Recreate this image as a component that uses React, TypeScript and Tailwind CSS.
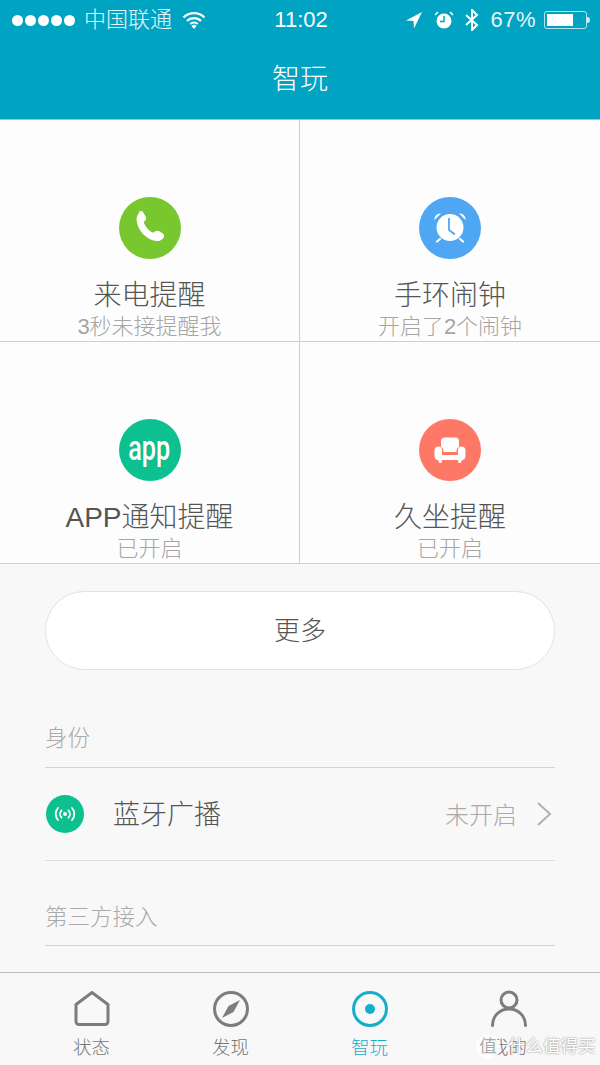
const cjk = { fontFamily: '"Liberation Sans", "Noto Sans CJK SC", sans-serif' };

const PhoneIcon = () => (
  <svg width="62" height="62" viewBox="0 0 62 62">
    <path
      transform="translate(30.500 30.500) scale(1.2) translate(-30.500 -30.500)"
      d="M21.500 17.500c1.200-1.100 3-1 3.800.4l2.100 3.600c.6 1.100.4 2.300-.5 3.100l-1.300 1.200c.9 3.700 4.500 7.700 8.100 9.100l1.500-1.200c.9-.7 2.100-.8 3.100-.2l3.300 2.100c1.300.8 1.500 2.500.5 3.600-1.400 1.500-3.400 2.900-5.900 2.600-8.400-1-15.800-9-16.500-17.500-.2-2.400.8-4.600 2.600-6.800z"
      fill="#fff"
    />
  </svg>
);

const AlarmIcon = () => (
  <svg width="62" height="62" viewBox="0 0 62 62">
    <circle cx="31" cy="30.500" r="13.500" fill="#fff" />
    <path d="M30 21v12l6 4.500" stroke="#4fa6f3" strokeWidth="1.800" fill="none" />
    <path d="M15.500 23c-.5-3.500 2.500-7 6.500-6.500zM46.500 23c.5-3.500-2.500-7-6.500-6.500z" fill="#fff" />
    <path d="M21 42l-3 2.500M41 42l3 2.500" stroke="#fff" strokeWidth="2.200" strokeLinecap="round" />
  </svg>
);

const SofaIcon = () => (
  <svg width="62" height="62" viewBox="0 0 62 62">
    <path d="M22 28v-6c0-2 1.500-3.500 3.500-3.500h11c2 0 3.500 1.500 3.500 3.500v6c-1.500.8-2.500 2-2.500 4v1h-13v-1c0-2-1-3.200-2.500-4z" fill="#fff" />
    <path d="M19.500 27.500c2.200 0 3.500 1.500 3.500 3.700V36h16v-4.800c0-2.200 1.300-3.700 3.500-3.700s4 1.500 4 3.700V37c0 2.300-1.500 4-3.500 4.200L41.500 44h-2l-.5-3H23l-.5 3h-2L19 41.200c-2-.2-3.500-1.900-3.500-4.200v-5.800c0-2.200 1.800-3.700 4-3.700z" fill="#fff" />
  </svg>
);

const features = [
  { title: '来电提醒', sub: '3秒未接提醒我', icon: <PhoneIcon />, color: 'bg-[#78c72e]' },
  { title: '手环闹钟', sub: '开启了2个闹钟', icon: <AlarmIcon />, color: 'bg-[#4fa6f3]' },
  {
    title: 'APP通知提醒',
    sub: '已开启',
    icon: <span className="text-[35px] leading-none text-white font-medium scale-x-[0.72] -mt-1" style={{ fontFamily: '"Roboto", sans-serif' }}>app</span>,
    color: 'bg-[#0cc08f]',
  },
  { title: '久坐提醒', sub: '已开启', icon: <SofaIcon />, color: 'bg-[#fd7866]' },
];

const StatusBar = () => (
  <div className="h-10 flex items-center text-white px-[10px]" style={cjk}>
    <div className="flex-1 flex items-center pl-[2px]">
      <div className="flex gap-[2px]">
        {[0, 1, 2, 3, 4].map((i) => (
          <span key={i} className="w-[11px] h-[11px] rounded-full bg-white" />
        ))}
      </div>
      <span className="ml-[9px] text-[22px] leading-none font-light text-white/90">中国联通</span>
      <svg className="ml-[10px]" width="24" height="18" viewBox="0 0 24 18">
        <path d="M1.500 6.500a15 15 0 0 1 21 0M5 10a10 10 0 0 1 14 0M8.300 13a5.500 5.500 0 0 1 7.400 0" stroke="#fff" strokeWidth="2.200" fill="none" />
        <path d="M12 18l-2.500-3a3.500 3.500 0 0 1 5 0z" fill="#fff" />
      </svg>
    </div>
    <span className="text-[22px] leading-none font-medium">11:02</span>
    <div className="flex-1 flex items-center justify-end">
      <svg width="18" height="18" viewBox="0 0 18 18">
        <path d="M17 1L1 9.500l7.500.5.500 7.500z" fill="#fff" />
      </svg>
      <svg className="ml-[11px]" width="20" height="20" viewBox="0 0 20 20">
        <circle cx="10" cy="11" r="7.500" fill="#fff" />
        <path d="M10 6v5.500H6" stroke="#00a4c2" strokeWidth="1.500" fill="none" />
        <path d="M1 5l3-3M19 5l-3-3" stroke="#fff" strokeWidth="1.500" />
      </svg>
      <svg className="ml-[10px]" width="16" height="22" viewBox="0 0 16 22">
        <path d="M2 6l11 10-5 5V1l5 5L2 16" stroke="#fff" strokeWidth="2" fill="none" />
      </svg>
      <span className="ml-[10px] text-[22px] leading-none font-light tracking-[0.5px] text-white/90">67%</span>
      <div className="ml-2 flex items-center">
        <div className="w-[43px] h-[18px] border border-white/70 rounded-[3px] p-[2px]">
          <div className="w-[26px] h-full bg-white" />
        </div>
        <div className="w-[3px] h-[6px] bg-white/80 rounded-r-sm" />
      </div>
    </div>
  </div>
);

const FeatureCell = ({ item, index }: { item: (typeof features)[number]; index: number }) => (
  <div className={`h-[222px] flex flex-col items-center border-b border-[#cfcfcf] ${index % 2 === 0 ? 'border-r' : ''}`}>
    <div className={`mt-[77px] w-[62px] h-[62px] rounded-full flex items-center justify-center ${item.color}`}>
      {item.icon}
    </div>
    <div className="mt-[19px] text-[28px] leading-[36px] font-light text-[#555]">{item.title}</div>
    <div className="text-[22px] leading-[26px] font-light text-[#a5a5a5]">{item.sub}</div>
  </div>
);

const tabs = [
  {
    label: '状态',
    icon: (
      <svg width="38" height="38" viewBox="0 0 38 38">
        <path d="M19 2.500L35 14.500V31.500a3 3 0 0 1-3 3H6a3 3 0 0 1-3-3V14.500z" fill="none" stroke="#7d7d7d" strokeWidth="3" strokeLinejoin="round" />
      </svg>
    ),
  },
  {
    label: '发现',
    icon: (
      <svg width="38" height="38" viewBox="0 0 38 38">
        <circle cx="19" cy="19" r="16.500" fill="none" stroke="#7d7d7d" strokeWidth="3" />
        <path d="M28 10L21.500 22 10 28l6.500-12z" fill="#7d7d7d" />
      </svg>
    ),
  },
  {
    label: '智玩',
    active: true,
    icon: (
      <svg width="38" height="38" viewBox="0 0 38 38">
        <circle cx="19" cy="19" r="16.500" fill="none" stroke="#14aecb" strokeWidth="3" />
        <circle cx="19" cy="19" r="5" fill="#14aecb" />
      </svg>
    ),
  },
  {
    label: '我的',
    icon: (
      <svg width="38" height="38" viewBox="0 0 38 38">
        <circle cx="19" cy="10" r="8" fill="none" stroke="#7d7d7d" strokeWidth="3" />
        <path d="M2.500 35.500c0-9.500 7-16.500 16.500-16.500s16.500 7 16.500 16.500" fill="none" stroke="#7d7d7d" strokeWidth="3" strokeLinecap="round" />
      </svg>
    ),
  },
];

export default function App() {
  return (
    <div className="relative w-[600px] h-[1065px] overflow-hidden flex flex-col bg-[#f8f8f8]" style={cjk}>
      <div className="bg-[#00a4c2] border-b border-[#80d0e0]">
        <StatusBar />
        <div className="h-[79px] flex items-center justify-center text-white text-[28px] font-light">智玩</div>
      </div>

      <div className="flex-1 overflow-hidden">
        {/* Grid of features */}
        <div className="grid grid-cols-2 bg-[#fdfdfd]">
          {features.map((item, i) => (
            <FeatureCell key={item.title} item={item} index={i} />
          ))}
        </div>

        <div className="px-[45px]">
          <button className="mt-[27px] w-full h-[79px] pt-[2px] rounded-full bg-white border border-[#e2e2e2] text-[26px] font-light text-[#555]">
            更多
          </button>

          <div className="mt-[52px] h-[46px] text-[22.500px] leading-[34px] font-light text-[#aaa] border-b border-[#d4d4d4]">身份</div>

          <div className="h-[93px] flex items-center border-b border-[#dedede]">
            <div className="w-[38px] h-[38px] ml-px rounded-full bg-[#0cc08f] flex items-center justify-center">
              <svg width="24" height="24" viewBox="0 0 24 24" fill="none" stroke="#fff" strokeWidth="1.800" strokeLinecap="round">
                <circle cx="12" cy="12" r="2" fill="#fff" stroke="none" />
                <path d="M8.500 8.500a5 5 0 0 0 0 7M15.500 8.500a5 5 0 0 1 0 7M5 6a9 9 0 0 0 0 12M19 6a9 9 0 0 1 0 12" />
              </svg>
            </div>
            <span className="ml-[29px] pt-[3px] text-[27px] font-light text-[#555]">蓝牙广播</span>
            <span className="ml-auto pt-[3px] text-[24px] font-light text-[#aaa]">未开启</span>
            <svg className="ml-[19px] mr-[3px]" width="16" height="26" viewBox="0 0 16 26">
              <path d="M2 2l12 11L2 24" fill="none" stroke="#b0b0b0" strokeWidth="2" />
            </svg>
          </div>

          <div className="mt-[39px] h-[46px] text-[22.500px] leading-[36px] font-light text-[#aaa] border-b border-[#d4d4d4]">第三方接入</div>
        </div>
      </div>

      {/* Bottom tabs */}
      <div className="h-[93px] border-t border-[#bdbdbd] bg-[#f8f8f8] px-[22px] grid grid-cols-4">
        {tabs.map((t) => (
          <div key={t.label} className="flex flex-col items-center pt-[17px]">
            {t.icon}
            <span className={`mt-[8px] text-[18.500px] leading-[24px] font-light ${t.active ? 'text-[#14aecb]' : 'text-[#777]'}`}>
              {t.label}
            </span>
          </div>
        ))}
      </div>

      {/* Watermark */}
      <div className="absolute left-[476px] top-[1035px] flex items-center text-white text-[17.500px] leading-none [text-shadow:0_0_2px_#777]">
        <span className="w-[24px] h-[24px] rounded-full bg-white/90 flex items-center justify-center text-[#aaa] [text-shadow:none]">值</span>
        <span className="ml-[8px]">什么值得买</span>
      </div>
    </div>
  );
}
